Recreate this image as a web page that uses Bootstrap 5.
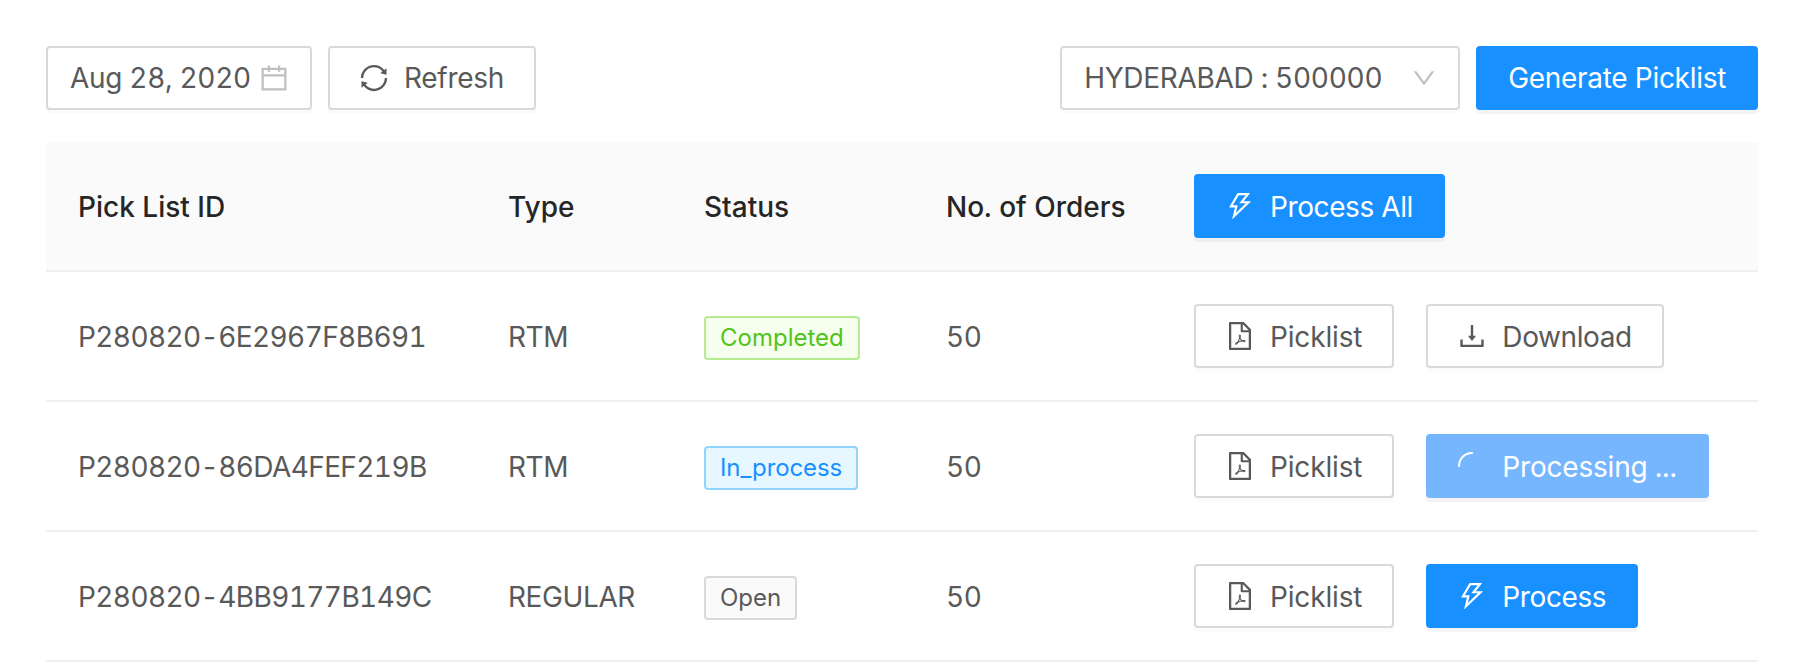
<!doctype html>
<html lang="en">
<head>
<meta charset="utf-8">
<title>Pick lists</title>
<link href="https://cdn.jsdelivr.net/npm/bootstrap@5.3.0/dist/css/bootstrap.min.css" rel="stylesheet">
<style>
body { font-family: Inter, "Liberation Sans", sans-serif; font-size: 28px; color: #595959; background: #fff; letter-spacing: -.4px; font-variant-numeric: tabular-nums; }
.page-wrap { padding: 46px 48px 0 46px; }
.ico { width: 28px; height: 28px; fill: currentColor; flex: none; display: block; margin-top: -2px; }
.ant-btn { display: inline-flex; align-items: center; justify-content: center; height: 64px; padding: 2px 30px 0; gap: 16px; font-size: 28px; line-height: 1; letter-spacing: -.4px; border: 2px solid #d9d9d9; border-radius: 4px; background: #fff; color: #595959; box-shadow: 0 4px 0 rgba(0,0,0,.015); white-space: nowrap; }
.ant-btn:hover, .ant-btn:active { background: #fff; color: #595959; border-color: #d9d9d9; }
.ant-btn-blue, .ant-btn-blue:hover, .ant-btn-blue:active { background: #1890ff; border-color: #1890ff; color: #fff; box-shadow: 0 4px 0 rgba(0,0,0,.045); }
.ant-btn-busy, .ant-btn-busy:hover { background: #76b6ff; border-color: #76b6ff; color: #fff; letter-spacing: -.2px; }
.ant-top { letter-spacing: -.3px; padding-top: 0; }
.ant-top .ico { margin-top: 0; }
.ant-pick { letter-spacing: -.15px; }
.date-box { width: 266px; padding: 0 22px; justify-content: space-between; gap: 8px; }
.date-box .ico { color: #bfbfbf; }
.select-box { width: 400px; padding: 0 22px; justify-content: space-between; }
.select-box .ico { width: 24px; height: 24px; color: #bfbfbf; }
.spin-ico { transform: rotate(-90deg); }
.pick-table { table-layout: fixed; width: 100%; margin: 32px 0 0; border-collapse: separate; border-spacing: 0; color: #595959; }
.pick-table th, .pick-table td { padding: 34px 0 30px 32px; border-bottom: 2px solid #f0f0f0; height: 130px; vertical-align: middle; font-size: 28px; background: #fff; color: #595959; box-shadow: none; line-height: 1.2; }
.pick-table th:last-child, .pick-table td:last-child { padding-top: 32px; padding-bottom: 32px; }
.pick-table td:first-child { letter-spacing: -.6px; }
.pick-table th { background: #fafafa; color: #262626; font-weight: 500; letter-spacing: 0; }
.pick-table th:nth-child(1) { width: 430px; }
.pick-table th:nth-child(2) { width: 196px; }
.pick-table th:nth-child(3) { width: 242px; }
.pick-table th:nth-child(4) { width: 248px; }
.st-tag { display: inline-block; height: 44px; line-height: 40px; padding: 0 14px; font-size: 24px; letter-spacing: 0; border: 2px solid #d9d9d9; border-radius: 4px; background: #fafafa; color: #595959; vertical-align: middle; }
.st-done { background: #f6ffed; border-color: #b7eb8f; color: #52c41a; }
.st-run { background: #e6f7ff; border-color: #91d5ff; color: #1890ff; letter-spacing: -.1px; }
.act-gap { gap: 32px; }
</style>
</head>
<body>
<svg class="d-none" xmlns="http://www.w3.org/2000/svg">
<symbol id="i-pdf" viewBox="64 64 896 896"><path d="M531.3 574.4l.3-1.4c5.8-23.9 13.1-53.7 7.4-80.7-3.8-21.3-19.5-29.6-32.9-30.2-15.8-.7-29.9 8.3-33.4 21.4-6.6 24-.7 56.8 10.1 98.6-13.6 32.4-35.3 79.5-51.2 107.5-29.6 15.3-69.3 38.9-75.2 68.7-1.2 5.5.2 12.5 3.5 18.8 3.7 7 9.6 12.4 16.5 15 3 1.1 6.6 2 10.8 2 17.6 0 46.1-14.2 84.1-79.4 5.8-1.9 11.8-3.9 17.6-5.9 27.2-9.2 55.4-18.8 80.9-23.1 28.2 15.1 60.3 24.8 82.1 24.8 21.6 0 30.1-12.8 33.3-20.5 5.6-13.5 2.9-30.5-6.2-39.6-13.2-13-45.3-16.4-95.3-10.2-24.6-15-40.7-35.4-52.4-65.8zM421.6 726.3c-13.9 20.2-24.4 30.3-30.1 34.7 6.7-12.3 19.8-25.3 30.1-34.7zm87.6-235.5c5.2 8.9 4.5 35.8.5 49.4-4.9-19.9-5.6-48.1-2.7-51.4.8.1 1.5.7 2.2 2zm-1.6 120.5c10.7 18.5 24.2 34.4 39.1 46.2-21.6 4.9-41.3 13-58.9 20.2-4.2 1.7-8.3 3.4-12.3 5 13.3-24.1 24.4-51.4 32.1-71.4zm155.6 65.5c.1.2.2.5-.4.9h-.2l-.2.3c-.8.5-9 5.3-44.3-8.6 40.6-1.9 45 7.3 45.1 7.4zm191.4-388.2L639.4 73.4c-6-6-14.1-9.4-22.6-9.4H192c-17.7 0-32 14.3-32 32v832c0 17.7 14.3 32 32 32h640c17.7 0 32-14.3 32-32V311.3c0-8.5-3.4-16.7-9.4-22.7zM790.2 326H602V137.8L790.2 326zm1.8 562H232V136h302v216a42 42 0 0 0 42 42h216v494z"/></symbol>
<symbol id="i-bolt" viewBox="64 64 896 896"><path d="M848 359.3H627.7L825.8 109c4.1-5.3.4-13-6.3-13H436c-2.8 0-5.5 1.5-6.9 4L170 547.5c-3.1 5.3.7 12 6.9 12h174.4l-89.4 357.6c-1.9 7.8 7.5 13.3 13.3 7.7L853.5 373c5.2-4.9 1.7-13.7-5.5-13.7zM378.2 732.5l60.3-241H281.1l189.6-327.4h224.6L487 427.4h211L378.2 732.5z"/></symbol>
</svg>
<div class="page-wrap">
  <div class="d-flex justify-content-between">
    <div class="d-flex gap-3">
      <div class="ant-btn ant-top date-box"><span>Aug 28, 2020</span>
        <svg class="ico" viewBox="64 64 896 896"><path d="M880 184H712v-64c0-4.4-3.6-8-8-8h-56c-4.4 0-8 3.6-8 8v64H384v-64c0-4.4-3.6-8-8-8h-56c-4.4 0-8 3.6-8 8v64H144c-17.7 0-32 14.3-32 32v664c0 17.7 14.3 32 32 32h736c17.7 0 32-14.3 32-32V216c0-17.7-14.3-32-32-32zm-40 656H184V460h656v380zM184 392V256h128v48c0 4.4 3.6 8 8 8h56c4.4 0 8-3.6 8-8v-48h256v48c0 4.4 3.6 8 8 8h56c4.4 0 8-3.6 8-8v-48h128v136H184z"/></svg>
      </div>
      <button type="button" class="btn ant-btn ant-top">
        <svg class="ico" viewBox="64 64 896 896"><path d="M168 504.2c1-43.7 10-86.1 26.9-126 17.3-41 42.1-77.7 73.7-109.4S337 212.3 378 195c42.4-17.9 87.4-27 133.9-27s91.5 9.1 133.8 27A341.5 341.5 0 0 1 755 268.8c9.9 9.9 19.2 20.4 27.8 31.4l-60.2 47a8 8 0 0 0 3 14.1l175.7 43c5 1.2 9.9-2.6 9.9-7.7l.8-180.9c0-6.7-7.7-10.5-12.9-6.3l-56.4 44.1C765.8 155.1 646.2 92 511.8 92 282.7 92 96.3 275.6 92 503.8a8 8 0 0 0 8 8.2h60c4.4 0 7.9-3.5 8-7.8zm756 7.8h-60c-4.4 0-7.9 3.5-8 7.8-1 43.7-10 86.1-26.9 126-17.3 41-42.1 77.8-73.7 109.4A342.45 342.45 0 0 1 512.1 856a342.24 342.24 0 0 1-243.2-100.8c-9.9-9.9-19.2-20.4-27.8-31.4l60.2-47a8 8 0 0 0-3-14.1l-175.7-43c-5-1.2-9.9 2.6-9.9 7.7l-.7 181c0 6.7 7.7 10.5 12.9 6.3l56.4-44.1C258.2 868.9 377.8 932 512.2 932c229.2 0 415.5-183.7 419.8-411.8a8 8 0 0 0-8-8.2z"/></svg>
        Refresh</button>
    </div>
    <div class="d-flex gap-3">
      <div class="ant-btn ant-top select-box"><span>HYDERABAD : 500000</span>
        <svg class="ico" viewBox="64 64 896 896"><path d="M884 256h-75c-5.1 0-9.9 2.5-12.9 6.6L512 654.2 227.9 262.6c-3-4.1-7.8-6.6-12.9-6.6h-75c-6.5 0-10.3 7.4-6.5 12.7l352.6 486.1c12.8 17.6 39 17.6 51.7 0l352.6-486.1c3.9-5.3.1-12.7-6.4-12.7z"/></svg>
      </div>
      <button type="button" class="btn ant-btn ant-top ant-btn-blue">Generate Picklist</button>
    </div>
  </div>
  <table class="table pick-table">
    <thead>
      <tr>
        <th>Pick List ID</th><th>Type</th><th>Status</th><th>No. of Orders</th>
        <th><button type="button" class="btn ant-btn ant-btn-blue"><svg class="ico"><use href="#i-bolt"/></svg>Process All</button></th>
      </tr>
    </thead>
    <tbody>
      <tr>
        <td>P280820-6E2967F8B691</td><td>RTM</td><td><span class="st-tag st-done">Completed</span></td><td>50</td>
        <td><div class="d-flex act-gap">
          <button type="button" class="btn ant-btn ant-pick"><svg class="ico"><use href="#i-pdf"/></svg>Picklist</button>
          <button type="button" class="btn ant-btn"><svg class="ico" viewBox="64 64 896 896"><path d="M505.7 661a8 8 0 0 0 12.6 0l112-141.7c4.1-5.2.4-12.9-6.3-12.9h-74.1V168c0-4.4-3.6-8-8-8h-60c-4.4 0-8 3.6-8 8v338.3H400c-6.7 0-10.4 7.7-6.3 12.9l112 141.8zM878 626h-60c-4.4 0-8 3.6-8 8v154H214V634c0-4.4-3.6-8-8-8h-60c-4.4 0-8 3.6-8 8v198c0 17.7 14.3 32 32 32h684c17.7 0 32-14.3 32-32V634c0-4.4-3.6-8-8-8z"/></svg>Download</button>
        </div></td>
      </tr>
      <tr>
        <td>P280820-86DA4FEF219B</td><td>RTM</td><td><span class="st-tag st-run">In_process</span></td><td>50</td>
        <td><div class="d-flex act-gap">
          <button type="button" class="btn ant-btn ant-pick"><svg class="ico"><use href="#i-pdf"/></svg>Picklist</button>
          <div class="ant-btn ant-btn-blue ant-btn-busy"><svg class="ico spin-ico" viewBox="0 0 1024 1024"><path d="M988 548c-19.9 0-36-16.1-36-36 0-59.4-11.6-117-34.6-171.3a440.45 440.45 0 0 0-94.3-139.9 437.71 437.71 0 0 0-139.9-94.3C629 83.6 571.4 72 512 72c-19.9 0-36-16.1-36-36s16.1-36 36-36c69.1 0 136.2 13.5 199.3 40.3C772.3 66 827 103 874 150c47 47 83.9 101.8 109.7 162.7 26.7 63.1 40.2 130.2 40.2 199.3.1 19.9-16 36-35.9 36z"/></svg>Processing ...</div>
        </div></td>
      </tr>
      <tr>
        <td>P280820-4BB9177B149C</td><td>REGULAR</td><td><span class="st-tag">Open</span></td><td>50</td>
        <td><div class="d-flex act-gap">
          <button type="button" class="btn ant-btn ant-pick"><svg class="ico"><use href="#i-pdf"/></svg>Picklist</button>
          <button type="button" class="btn ant-btn ant-btn-blue"><svg class="ico"><use href="#i-bolt"/></svg>Process</button>
        </div></td>
      </tr>
    </tbody>
  </table>
</div>
</body>
</html>
